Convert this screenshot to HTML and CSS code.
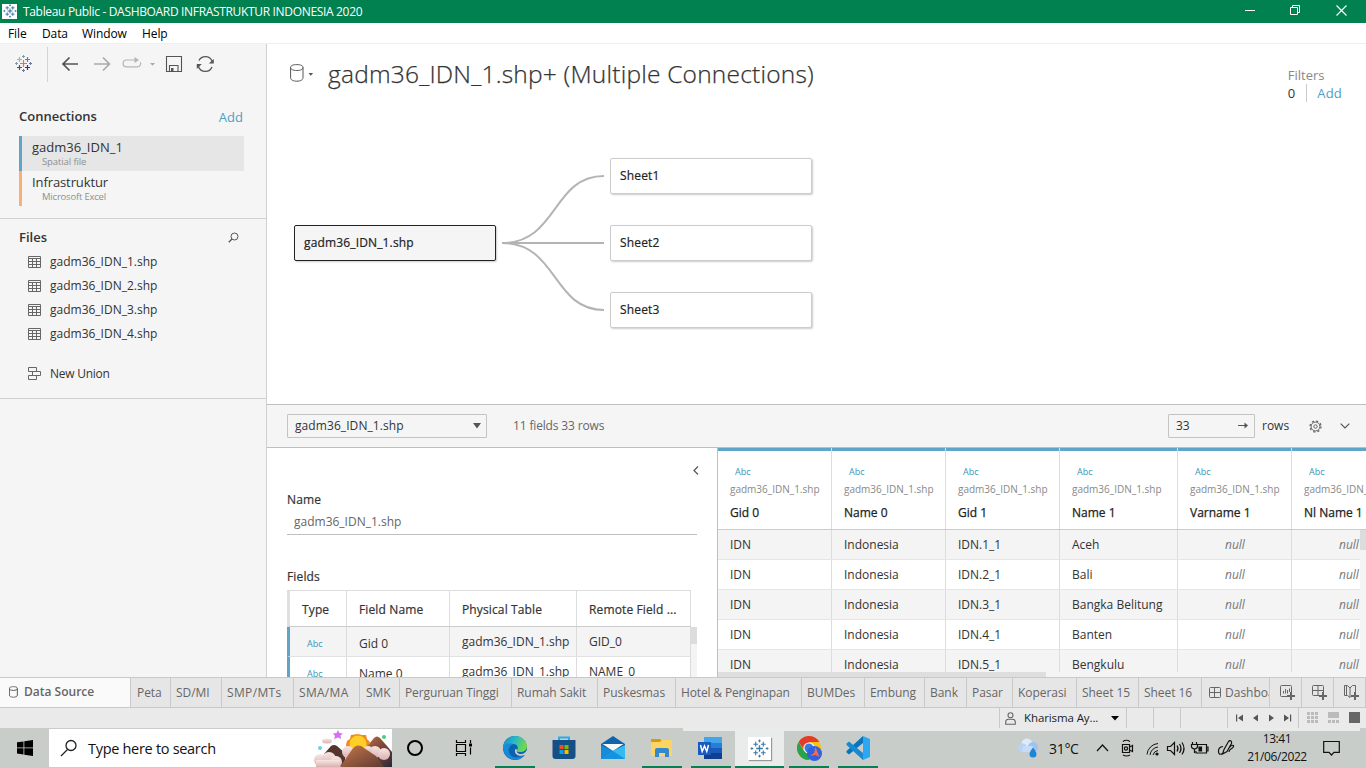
FILE: index.html
```html
<!DOCTYPE html>
<html lang="en">
<head>
<meta charset="utf-8">
<title>Tableau Public - DASHBOARD INFRASTRUKTUR INDONESIA 2020</title>
<link rel="stylesheet" href="styles.css">
</head>
<body>
<svg class="defs" width="0" height="0">
  <defs>
    <symbol id="cross" viewBox="0 0 20 20"><path d="M10 6.500v7M6.500 10h7" stroke-width="1.4"/><path d="M6 3v5M3.500 5.500h5M14 3v5M11.500 5.500h5M6 12v5M3.500 14.500h5M14 12v5M11.500 14.500h5" stroke-width="1.2"/><path d="M10 .5v3M8.500 2h3M10 16.500v3M8.500 18h3M2 8.500v3M.5 10h3M18 8.500v3M16.500 10h3" stroke-width="1"/></symbol>
    <symbol id="grid" viewBox="0 0 13 12"><path d="M.5.5h12v11H.5zM.5 2.500h12M.5 5.500h12M.5 8.500h12M4.500 2.500v9M8.500 2.500v9" fill="none" stroke="#666"/></symbol>
    <symbol id="cyl" viewBox="0 0 14 18"><path d="M.6 3.500v10.300c0 2 2.500 3.400 6.200 3.400s6.200-1.400 6.200-3.400V3.500M.6 3.500C.6 1.600 3 .6 6.800.6s6.200 1 6.200 2.900-2.400 3-6.200 3S.6 5.400.6 3.500z" fill="none" stroke="#555"/></symbol>
    <symbol id="dash" viewBox="0 0 12 12"><path d="M.5 1.500q0-1 1-1h9q1 0 1 1v8q0 1-1 1h-9q-1 0-1-1zM5.500.5v10M.5 5.500h11" fill="none" stroke="#666"/></symbol>
  </defs>
</svg>
<div class="app">
  <header class="titlebar">
    <span class="logo"><svg class="s14" viewBox="0 0 20 20" stroke="#2c6b9a"><use href="#cross"/></svg></span>
    <span class="title">Tableau Public - DASHBOARD INFRASTRUKTUR INDONESIA 2020</span>
    <div class="winbtns">
      <svg width="46" height="23"><path d="M16 10.500h10" stroke="#fff"/></svg>
      <svg width="46" height="23"><path d="M15.500 7.500h7v7h-7zM17.500 7.500v-2h7v7h-2" fill="none" stroke="#fff"/></svg>
      <svg width="46" height="23"><path d="M15.500 5.500l10 10M25.500 5.500l-10 10" stroke="#fff" stroke-width="1.200"/></svg>
    </div>
  </header>
  <nav class="menu"><span class="m1">File</span><span class="m2">Data</span><span class="m3">Window</span><span class="m4">Help</span></nav>

  <div class="work">
    <aside class="side">
      <div class="toolbar">
        <svg width="260" height="40" fill="none">
          <g stroke-width="1.200">
            <path d="M23.500 16v7M20 19.500h7" stroke="#e8762d"/>
            <path d="M19.500 13v5M17 15.500h5" stroke="#eb9d55"/><path d="M27.500 13v5M25 15.500h5" stroke="#59879b"/>
            <path d="M19.500 21v5M17 23.500h5" stroke="#c72035"/><path d="M27.500 21v5M25 23.500h5" stroke="#1f457e"/>
            <path d="M23.500 11v3M22 12.500h3M16.500 18v3M15 19.500h3" stroke="#6fa0b5" stroke-width="1"/><path d="M23.500 25v3M22 26.500h3M30.500 18v3M29 19.500h3" stroke="#6c76a8" stroke-width="1"/>
          </g>
          <path d="M47.500 3v35" stroke="#d4d4d4"/>
          <path d="M78 20H63M69.500 13.500L63 20l6.500 6.500" stroke="#555" stroke-width="1.700"/>
          <path d="M94 20h15M103 13.500l6.500 6.500-6.500 6.500" stroke="#aaa" stroke-width="1.700"/>
          <path d="M137 16h-10.500a3.400 3.400 0 0 0 0 6.800h11a3.200 3.200 0 0 0 2.900-4.500" stroke="#b5b5b5" stroke-width="1.200"/><path d="M134.500 13l4.500 3-4.500 3z" fill="#b5b5b5"/>
          <path d="M150 19h5l-2.500 2.800z" fill="#aaa"/>
          <path d="M166.500 12.500h15v15h-15zM169.500 27.500v-6h8.500v6" stroke="#555" stroke-width="1.100"/><path d="M171 24h2.500v3H171z" fill="#555"/>
          <path d="M199 16.500a7.200 7.200 0 0 1 13 .5M198.500 22.500a7.200 7.200 0 0 0 13.500.5" stroke="#555" stroke-width="1.300"/><path d="M213.800 15v4.500h-5zM196.800 25v-5h5z" fill="#555"/>
        </svg>
      </div>
      <section class="conns">
        <div class="row-head"><b>Connections</b><a class="add">Add</a></div>
        <div class="conn on"><div>gadm36_IDN_1</div><small>Spatial file</small></div>
        <div class="conn or"><div>Infrastruktur</div><small>Microsoft Excel</small></div>
      </section>
      <section class="files">
        <div class="row-head"><b>Files</b><svg width="12" height="12" fill="none" stroke="#555"><circle cx="6.500" cy="4.500" r="3.500"/><path d="M4 7L.8 10.200" stroke-width="1.300"/></svg></div>
        <div class="file"><svg><use href="#grid"/></svg><span>gadm36_IDN_1.shp</span></div>
        <div class="file"><svg><use href="#grid"/></svg><span>gadm36_IDN_2.shp</span></div>
        <div class="file"><svg><use href="#grid"/></svg><span>gadm36_IDN_3.shp</span></div>
        <div class="file"><svg><use href="#grid"/></svg><span>gadm36_IDN_4.shp</span></div>
        <div class="file union"><svg viewBox="0 0 14 14" fill="none" stroke="#666"><path d="M.5.500h8v4h-8zM4.500 4.500h8v4h-8zM.5 8.500h8v4h-8z"/></svg><span>New Union</span></div>
      </section>
    </aside>

    <main class="main">
      <section class="canvas">
        <div class="dshead">
          <svg class="dsicon" viewBox="0 0 14 18"><use href="#cyl"/></svg><svg width="8" height="5"><path d="M1.500 1h4.600L3.800 3.800z" fill="#555"/></svg>
          <h1>gadm36_IDN_1.shp+ (Multiple Connections)</h1>
          <div class="filters"><div class="fl">Filters</div><div class="fr"><span>0</span><a class="add">Add</a></div></div>
        </div>
        <svg class="noodles" width="110" height="150" fill="none" stroke="#b4b4b4" stroke-width="2"><path d="M0 76h102M0 76C56 76 50 9 102 9M0 76C56 76 50 143 102 143"/></svg>
        <div class="node root">gadm36_IDN_1.shp</div>
        <div class="node n1">Sheet1</div>
        <div class="node n2">Sheet2</div>
        <div class="node n3">Sheet3</div>
      </section>

      <section class="gridbar">
        <div class="select">gadm36_IDN_1.shp<svg width="8" height="6"><path d="M0 0h8L4 5.500z" fill="#555"/></svg></div>
        <span class="info">11 fields 33 rows</span>
        <div class="rowsbox">33<svg width="11" height="8"><path d="M0 3.500h8" stroke="#555"/><path d="M6.500 .5L10 3.500 6.500 6.500z" fill="#555"/></svg></div>
        <span class="rows">rows</span>
        <svg class="gear" width="13" height="13" viewBox="0 0 13 13" fill="none" stroke="#666"><circle cx="6.500" cy="6.500" r="4.400"/><circle cx="6.500" cy="6.500" r="1.700"/><circle cx="6.500" cy="6.500" r="5.500" stroke-dasharray="2.160" stroke-width="1.300"/></svg>
        <svg class="chev" width="10" height="6"><path d="M.7.7L5 5 9.300.7" fill="none" stroke="#555" stroke-width="1.200"/></svg>
      </section>

      <section class="lower">
        <div class="meta">
          <svg class="collapse" width="6" height="9"><path d="M5 .5l-4 4 4 4" fill="none" stroke="#555" stroke-width="1.200"/></svg>
          <div class="lab name">Name</div>
          <div class="nameval">gadm36_IDN_1.shp</div>
          <div class="lab fields">Fields</div>
          <div class="mtable">
            <div class="mrow mh"><span>Type</span><span>Field Name</span><span>Physical Table</span><span>Remote Field ...</span></div>
            <div class="mrow g"><span class="abc">Abc</span><span class="low">Gid 0</span><span>gadm36_IDN_1.shp</span><span>GID_0</span></div>
            <div class="mrow"><span class="abc">Abc</span><span class="low">Name 0</span><span>gadm36_IDN_1.shp</span><span>NAME_0</span></div>
            <i class="mtrack"></i>
          </div>
        </div>
        <div class="data">
          <div class="drow dh">
            <div><em>Abc</em><small>gadm36_IDN_1.shp</small><b>Gid 0</b></div>
            <div><em>Abc</em><small>gadm36_IDN_1.shp</small><b>Name 0</b></div>
            <div><em>Abc</em><small>gadm36_IDN_1.shp</small><b>Gid 1</b></div>
            <div><em>Abc</em><small>gadm36_IDN_1.shp</small><b>Name 1</b></div>
            <div><em>Abc</em><small>gadm36_IDN_1.shp</small><b>Varname 1</b></div>
            <div><em>Abc</em><small>gadm36_IDN_1.shp</small><b>Nl Name 1</b></div>
          </div>
          <div class="dbody">
            <div class="drow"><div>IDN</div><div>Indonesia</div><div>IDN.1_1</div><div>Aceh</div><div class="nul">null</div><div class="nul">null</div></div>
            <div class="drow"><div>IDN</div><div>Indonesia</div><div>IDN.2_1</div><div>Bali</div><div class="nul">null</div><div class="nul">null</div></div>
            <div class="drow"><div>IDN</div><div>Indonesia</div><div>IDN.3_1</div><div>Bangka Belitung</div><div class="nul">null</div><div class="nul">null</div></div>
            <div class="drow"><div>IDN</div><div>Indonesia</div><div>IDN.4_1</div><div>Banten</div><div class="nul">null</div><div class="nul">null</div></div>
            <div class="drow"><div>IDN</div><div>Indonesia</div><div>IDN.5_1</div><div>Bengkulu</div><div class="nul">null</div><div class="nul">null</div></div>
            <i class="vtrack"></i>
          </div>
          <div class="htrack"><i></i></div>
        </div>
      </section>
    </main>
  </div>

  <nav class="tabs">
    <div class="tab ds"><svg width="9" height="12" viewBox="0 0 14 18"><use href="#cyl" stroke-width="1.500"/></svg>Data Source</div>
    <div class="tab w40">Peta</div><div class="tab w51">SD/MI</div><div class="tab w72">SMP/MTs</div><div class="tab w66">SMA/MA</div><div class="tab w40">SMK</div><div class="tab w112">Perguruan Tinggi</div><div class="tab w86">Rumah Sakit</div><div class="tab w78">Puskesmas</div><div class="tab w126">Hotel &amp; Penginapan</div><div class="tab w63">BUMDes</div><div class="tab w60">Embung</div><div class="tab w42">Bank</div><div class="tab w46">Pasar</div><div class="tab w64">Koperasi</div><div class="tab w62">Sheet 15</div><div class="tab w63">Sheet 16</div>
    <div class="tab db"><svg width="12" height="12"><use href="#dash"/></svg>Dashboard 1</div>
    <div class="tab ic"><svg width="16" height="16" fill="none" stroke="#666"><path d="M7 11.500H1.500a1 1 0 0 1-1-1v-9a1 1 0 0 1 1-1h9a1 1 0 0 1 1 1V7M3.500 6v2.500M5.500 4v4.500M7.500 5v3.500M9.500 3.500V7"/><path d="M7 11h8M11 7v8" stroke-width="2"/></svg></div>
    <div class="tab ic"><svg width="16" height="16" fill="none" stroke="#666"><path d="M7 10.500H1.500a1 1 0 0 1-1-1v-8a1 1 0 0 1 1-1h9a1 1 0 0 1 1 1V7M6 .5v10M.5 5.500h11"/><path d="M7 11h8M11 7v8" stroke-width="2"/></svg></div>
    <div class="tab ic"><svg width="16" height="16" fill="none" stroke="#666"><path d="M7.500 11L6 12.500l-2.500-2h-3V.5h3L6 3l2.500-2.500h3V7M6 3v9M2.500 .5v10"/><path d="M7 11h8M11 7v8" stroke-width="2"/></svg></div>
  </nav>
  <div class="status">
    <div class="user"><svg width="11" height="13" fill="none" stroke="#666" stroke-width="1.100"><circle cx="5.500" cy="3.200" r="2.500"/><path d="M.7 12.300V10q0-2.800 3-2.800h3.600q3 0 3 2.800v2.300z"/></svg><span>Kharisma Ay...</span><svg width="8" height="5"><path d="M0 0h8L4 4.500z"/></svg></div>
    <div class="c27"></div><div class="c27"></div><div class="c47"></div>
    <div class="pager"><svg width="56" height="8" fill="#555"><path d="M0 .5h1.200v7H0zM7 .5v7L2 4zM22 .5v7L17 4zM33 .5v7L38 4zM48 .5v7L53 4zM54 .5h1.200v7H54z"/></svg></div>
    <div class="views"><svg width="54" height="12"><path d="M0 0h3v3H0zM4 0h3v3H4zM8 0h3v3H8zM0 4h3v3H0zM4 4h3v3H4zM8 4h3v3H8zM0 8h3v3H0zM4 8h3v3H4zM8 8h3v3H8zM21 0h11v6H21zM21 8h3v3h-3zM25 8h3v3h-3zM29 8h3v3h-3z" fill="#bbb"/><path d="M42 0h11v11H42z" fill="#666"/></svg></div>
  </div>

  <footer class="taskbar">
    <div class="start"><svg width="16" height="16"><path d="M0 2.300L6.500 1.400v6.100H0zM7.300 1.200L16 0v7.500H7.300zM0 8.300h6.500v6.100L0 13.600zM7.300 8.300H16V16l-8.700-1.200z"/></svg></div>
    <div class="search">
      <svg width="18" height="18" fill="none" stroke="#222" stroke-width="1.300"><circle cx="11" cy="6.500" r="5"/><path d="M7.500 10.500L1 17"/></svg><span>Type here to search</span>
      <svg class="hills" width="78" height="37" viewBox="0 0 78 37">
        <defs><linearGradient id="mt" x1="0" y1="0" x2="1" y2="1"><stop offset="0" stop-color="#c77748"/><stop offset=".5" stop-color="#7b4636"/><stop offset="1" stop-color="#29283a"/></linearGradient><linearGradient id="mf" x1="0" y1="0" x2="1" y2="1"><stop offset="0" stop-color="#c77748"/><stop offset="1" stop-color="#5f3a33"/></linearGradient><linearGradient id="cl" x1="0" y1="0" x2="0" y2="1"><stop stop-color="#f8e6e4"/><stop offset="1" stop-color="#d9b1b1"/></linearGradient></defs>
        <path d="M44 4l4 1 4 0 1 4 3 3-2 4-1 5-20-1-1-5 1-4 3-2 1-4z" fill="#ef8a1d"/><circle cx="44" cy="14" r="8.500" fill="#ffcf27"/>
        <path d="M50 20l10-12q3-3 6 0l7 8 5 6v15H48z" fill="url(#mt)"/><path d="M10 24l7-8q3-2 6 0l9 8-2 12H10z" fill="#52352f"/>
        <g fill="url(#cl)"><circle cx="61" cy="22" r="6"/><circle cx="70" cy="24" r="6"/><circle cx="54" cy="20" r="4"/><circle cx="34" cy="22" r="6"/><circle cx="6" cy="30" r="6"/><circle cx="15" cy="29" r="7"/><circle cx="22" cy="32" r="6"/><path d="M2 30h24v7H2z"/><ellipse cx="13" cy="11" rx="5" ry="2.500"/></g>
        <path d="M26 37l11-16q6-9 13-3l12 8 8 11z" fill="url(#mf)"/>
        <path d="M24 0l1.500 3 3.500.5-2.500 2L27 9l-3-1.500L20 9l1-3-2-2.500 3.500-.5z" fill="#d86ff2"/><circle cx="70" cy="7" r="2" fill="#48cf77"/><circle cx="6" cy="18" r="2" fill="#62d5e5"/>
      </svg>
    </div>
    <div class="ti left1"><svg width="18" height="18"><circle cx="9" cy="9" r="7" fill="none" stroke="#000" stroke-width="2"/></svg></div>
    <div class="ti left2"><svg width="18" height="18" fill="none" stroke="#000" stroke-width="1.200"><path d="M1.500 1v2.500h9V1M1.500 17v-2.500h9V17M1.500 5.500h9v7h-9zM15.500 1v3M15.500 8.500v7"/><path d="M14 4.500h3v3h-3z" fill="#000" stroke="none"/></svg></div>
    <div class="ti run edge"><svg width="24" height="24"><defs><linearGradient id="ed" x1="0" y1="0" x2="1" y2=".3"><stop stop-color="#1687ce"/><stop offset=".5" stop-color="#27b6cb"/><stop offset="1" stop-color="#70d84d"/></linearGradient></defs><circle cx="12" cy="12" r="12" fill="#0c62ae"/><path d="M0 11C1 4 6 0 12 0c7 0 12 5 12 10 0 4-3 6-7 6-3 0-4-1-3-2 2-3 0-6-4-6-5 0-9 2-10 6z" fill="url(#ed)"/><path d="M10 8.500c-5 1-6 9-1 12 3 2 8 1 12-2-4 7-12 6-17 2-5-5-4-12 1-13q3-1 5 1z" fill="#178bd8"/><path d="M14 14c-1 2 1 4 4 4 3 0 5-2 5.500-4l.5 2-2 3c-5 2-11 0-10-5q1-2 2 0z" fill="#c9cdca"/></svg></div>
    <div class="ti"><svg width="24" height="24"><path d="M7 5V1.500h10V5" fill="none" stroke="#28aee5" stroke-width="2"/><path d="M.5 4h23v16q0 3-3 3h-17q-3 0-3-3z" fill="#164f85"/><path d="M7.500 9h4v4h-4z" fill="#f25022"/><path d="M12.500 9h4v4h-4z" fill="#7fba00"/><path d="M7.500 14h4v4h-4z" fill="#00a4ef"/><path d="M12.500 14h4v4h-4z" fill="#ffb900"/></svg></div>
    <div class="ti"><svg width="24" height="24"><path d="M0 8l12-8 12 8v15H0z" fill="#1063ad"/><path d="M1.500 8h21L12 15z" fill="#f7f7f7"/><path d="M0 9l12 6L0 23z" fill="#168bd8"/><path d="M24 9v14H0l12-8z" fill="#35baf0"/><path d="M0 23l12-8 12 8z" fill="#1593e0"/></svg></div>
    <div class="ti run"><svg width="22" height="20"><path d="M0 1h9l2 2h10v5H0z" fill="#d99a08"/><path d="M0 4h9l2-2h10v16H0z" fill="#fcd462"/><path d="M4 19v-7q0-2 2-2h10q2 0 2 2v7h-4v-4H8v4z" fill="#3289cf"/></svg></div>
    <div class="ti run"><svg width="25" height="22"><path d="M6 0h18v22H6z" fill="#2b7cd3"/><path d="M6 0h18v6H6z" fill="#41a5ee"/><path d="M6 11h18v6H6z" fill="#185abd"/><path d="M6 16h18v6H6z" fill="#103f91"/><path d="M0 5h13v13H0z" fill="#185abd"/><path d="M2.500 8l1.700 6.500L6.500 9l2.300 5.500L10.500 8" fill="none" stroke="#fff" stroke-width="1.500"/></svg></div>
    <div class="ti run active"><span class="tab-logo"><svg class="s19" viewBox="0 0 20 20" stroke="#3b7aa5"><use href="#cross"/></svg></span></div>
    <div class="ti run chrome"><svg width="27" height="25"><circle cx="12" cy="12" r="12" fill="#fbc116"/><path d="M1.600 6A12 12 0 0 1 22.400 6H12L8 15z" fill="#e33b2e"/><path d="M1.600 6A12 12 0 0 0 12 24l5-9H7z" fill="#29a24c"/><circle cx="12" cy="12" r="5.600" fill="#fff"/><circle cx="12" cy="12" r="4.500" fill="#3879e8"/><circle cx="17.500" cy="17.500" r="7.500" fill="#2f62df"/><path d="M18.500 11l4 10-4-2-5.500 1 4-3z" fill="#f06a50"/></svg></div>
    <div class="ti run"><svg width="24" height="24"><path d="M17 0l7 3v18l-7 3z" fill="#2aa8f2"/><path d="M17 0v7L3 18.500.5 16.500v-1.500z" fill="#0874bb"/><path d="M17 24v-7L3 5.500.5 7.500V9z" fill="#178bd0"/></svg></div>
    <div class="tray">
      <svg class="weather" width="22" height="20"><circle cx="9" cy="6" r="5.500" fill="#dceafb"/><circle cx="4.500" cy="10" r="4.500" fill="#b8d2f4"/><circle cx="15" cy="9" r="5" fill="#9fc3ef"/><path d="M5 8h10v6H4z" fill="#c7dcf7"/><path d="M15 9.500q3.500 4.500 3.500 6.500a3.500 3.500 0 0 1-7 0q0-2 3.500-6.500z" fill="#1687d9"/></svg>
      <span class="temp">31°C</span>
      <svg class="icons" width="142" height="18" fill="none" stroke="#111" stroke-width="1.200"><path d="M1 12l5.500-6 5.500 6M26.500 5.500h7v8h-7zM33.500 8l3-1.500v6L33.500 11M27 2.500q3-2.500 7 0M27 16q3.500 2 7 0"/><circle cx="30" cy="9.500" r="1.600"/><path d="M51 15.500A12 12 0 0 1 62 4.500M54 16A9 9 0 0 1 62 8M57 16A6 6 0 0 1 62 11.500" stroke-width="1"/><circle cx="61" cy="15" r="1" fill="#111"/><path d="M71.500 7.500h3l4-4v12l-4-4h-3zM81 6.500q2 3 0 6M83.500 5q3 4.500 0 9M86 3.500q4 6 0 12"/><path d="M101 5.500h9.500v8.500H100v-2M110.500 8h1.500v4h-1.500M96.500 3v3M100.500 3v3M95.500 5.500h6v2q0 2-3 2.500-3-.5-3-2.500zM98.500 10v4"/><path d="M103 8h2.500v4H103z" fill="#111"/></svg>
      <svg class="pen" width="18" height="18" viewBox="0 0 18 18" fill="none" stroke="#111" stroke-width="1.200"><path d="M5.500 15L7 10.500l4.500-8q1.500-1.500 2.500-.5t.5 2.500l-4.500 8zM6 7.500Q1 8 1.500 13q.5 3.500 4 1.500M12.500 8.500q2-3 4-2 .5 2-2.500 3.500-2 1-2 3"/></svg>
      <div class="clock"><div>13:41</div><div>21/06/2022</div></div>
      <svg class="note" width="17" height="17" fill="none" stroke="#111" stroke-width="1.200"><path d="M.7 1.500h15.600v10.800H11L8.500 15 6 12.300H.7z"/></svg>
    </div>
    <i class="strip"></i>
  </footer>
</div>
</body>
</html>
```
FILE: styles.css
```css
* { box-sizing: border-box; }
body { margin: 0; overflow: hidden; font: 12px/16px "Open Sans", "Noto Sans", sans-serif; color: #333; }
svg { display: block; flex: none; }
.defs { position: absolute; }
.s14 { width: 14px; height: 14px; }
.s19 { width: 19px; height: 19px; }
.app { width: 1366px; height: 768px; display: flex; flex-direction: column; overflow: hidden; }
.add { color: #4e9fc1; }

.titlebar { height: 23px; flex: none; background: #00814f; color: #fff; display: flex; align-items: center; }
.logo { width: 15px; height: 15px; margin: -1px 6px 0 2px; background: #fff; display: grid; place-items: center; }
.title { font-size: 12px; letter-spacing: -.33px; }
.winbtns { margin-left: auto; display: flex; margin-right: -1px; }
.menu { height: 21px; flex: none; display: flex; align-items: center; color: #000; border-bottom: 1px solid #efefef; padding: 2px 0 0 8px; }
.menu span { letter-spacing: -.1px; }
.m1 { width: 34px; }
.m2 { width: 40px; }
.m3 { width: 60px; }

.work { height: 633px; flex: none; display: flex; }
.side { width: 267px; flex: none; background: #f5f5f5; border-right: 1px solid #d0d0d0; }
.toolbar { height: 40px; }
.row-head { display: flex; justify-content: space-between; align-items: center; }
.row-head b { font-size: 13px; font-weight: 600; letter-spacing: 0; padding-bottom: 2px; }
.row-head .add { font-size: 13px; }
.conns { height: 135px; padding: 24px 22px 0 19px; border-bottom: 1px solid #d0d0d0; }
.conns .row-head { height: 18px; margin-bottom: 10px; padding-right: 1px; }
.conn { height: 35px; border-left: 3px solid #60a5c8; padding: 3px 0 0 10px; font-size: 13px; }
.conn small { display: block; font-size: 9.500px; line-height: 13px; padding-left: 10px; color: #8f8f8f; letter-spacing: -.2px; }
.on { background: #e6e6e6; }
.on small { letter-spacing: -.1px; }
.or { border-color: #fbb072; letter-spacing: -.1px; }
.files { height: 180px; border-bottom: 1px solid #d0d0d0; padding: 9px 26px 0 19px; }
.files .row-head { height: 20px; margin-bottom: 2px; }
.file { height: 24px; display: flex; align-items: center; padding-left: 9px; gap: 9px; }
.file svg { width: 13px; height: 12px; }
.union { margin-top: 16px; }
.union svg { width: 14px; height: 14px; margin-right: -1px; }
.union span { letter-spacing: -.25px; }

.main { flex: 1; min-width: 0; display: flex; flex-direction: column; }
.canvas { height: 360px; position: relative; }
.dshead { display: flex; align-items: flex-start; padding: 20px 24px 0 23px; }
.dsicon { width: 14px; height: 18px; }
.dsicon + svg { margin: 8px 0 0 3px; }
h1 { margin: -6px 0 0 13px; font-size: 24.500px; line-height: 32px; font-weight: 300; white-space: nowrap; letter-spacing: .21px; -webkit-text-stroke: .25px #333; }
.filters { margin-left: auto; font-size: 13px; line-height: 18px; padding-top: 2px; color: #888; }
.fl { margin-left: -1px; }
.fr { display: flex; color: #333; margin-left: -1px; }
.fr .add { letter-spacing: .2px; }
.fr span { border-right: 1px solid #ccc; padding-right: 11px; margin-right: 10px; }
.noodles { position: absolute; left: 235px; top: 123px; }
.node { position: absolute; left: 343px; width: 202px; height: 36px; border: 1px solid #ccc; border-radius: 2px; background: #fff; box-shadow: 1px 1px 2px #ccc; padding: 9px; font-weight: 500; color: #222; -webkit-text-stroke: .2px #222; letter-spacing: .15px; }
.root { left: 27px; top: 181px; background: #f5f5f5; border-color: #222; }
.n1 { top: 114px; }
.n2 { top: 181px; }
.n3 { top: 248px; }

.gridbar { height: 44px; flex: none; background: #f5f5f5; border: solid #bfbfbf; border-width: 1px 0; display: flex; align-items: center; padding: 0 16px 0 20px; }
.select, .rowsbox { height: 24px; border: 1px solid #c4c4c4; border-radius: 1px; display: flex; align-items: center; justify-content: space-between; padding: 0 5px 0 7px; font-weight: 500; }
.select { width: 200px; letter-spacing: .08px; }
.info { margin-left: 26px; color: #666; letter-spacing: -.15px; }
.rowsbox { width: 87px; margin-left: auto; }
.rows { margin: 0 20px 0 7px; width: 27px; }
.chev { margin-left: 18px; }

.lower { flex: 1; min-height: 0; display: flex; overflow: hidden; }
.meta { width: 450px; flex: none; padding: 18px 0 0 20px; }
.collapse { margin-left: 406px; }
.lab { font-weight: 500; -webkit-text-stroke: .2px #333; letter-spacing: .15px; }
.name { margin-top: 17px; }
.nameval { width: 410px; height: 27px; border-bottom: 1px solid #bfbfbf; padding: 6px 7px; color: #666; }
.fields { margin: 34px 0 5px; }
.mtable { width: 410px; position: relative; }
.mrow { width: 404px; height: 30px; display: grid; grid-template-columns: 57px 103px 127px 114px; border-left: 3px solid #60a5c8; border-bottom: 1px solid #e2e2e2; }
.mrow span { border-right: 1px solid #dcdcdc; padding: 6px 0 0 12px; line-height: 17px; white-space: nowrap; }
.mrow .low { padding-top: 8px; }
.mrow .abc { padding: 8px 0 0 17px; color: #3b96b4; font-size: 9px; }
.mh { height: 37px; border-left-color: #e0e0e0; border-top: 1px solid #dcdcdc; border-bottom-color: #ccc; font-weight: 500; -webkit-text-stroke: .2px #333; letter-spacing: .13px; }
.mh span { padding-top: 10px; }
.g { background: #f4f4f4; }
.mtrack { position: absolute; right: 0; top: 37px; width: 6px; height: 60px; background: linear-gradient(#dcdcdc 17px, #f4f4f4 17px); }

.data { flex: 1; min-width: 0; border-left: 1px solid #bfbfbf; overflow: hidden; }
.drow { display: grid; grid-template-columns: 114px 114px 114px 118px 114px 114px; height: 30px; width: 688px; border-bottom: 1px solid #e6e6e6; }
.drow > div { border-right: 1px solid #dcdcdc; padding: 6px 0 0 12px; white-space: nowrap; line-height: 17px; }
.drow .nul { padding-left: 47px; color: #777; font-style: italic; }
.dh { height: 82px; border-bottom-color: #ccc; }
.dh > div { background: linear-gradient(#60a5c8, #60a5c8) padding-box 0 0 / 100% 3px no-repeat; padding-top: 16px; }
.dh em { display: block; font: 9px/16px "Open Sans", sans-serif; font-weight: 500; color: #3b96b4; padding-left: 5px; }
.dh small { display: block; font-size: 10px; line-height: 18px; color: #888; }
.dh b { display: block; font-weight: 500; line-height: 18px; margin-top: 6px; color: #222; -webkit-text-stroke: .25px #222; }
.dbody { height: 142px; overflow: hidden; position: relative; }
.dbody .drow:nth-child(odd) { background: #f4f4f4; }
.vtrack { position: absolute; right: 0; top: 0; width: 6px; height: 142px; background: linear-gradient(#dcdcdc 20px, #f4f4f4 20px); }
.htrack { height: 5px; background: #f4f4f4; }
.htrack i { display: block; width: 328px; height: 5px; background: #dedede; }

.tabs { height: 31px; flex: none; display: flex; border: solid #c9c9c9; border-width: 1px 0; background: #e6e6e6; color: #666; }
.tab { height: 29px; flex: none; border-right: 1px solid #c9c9c9; display: flex; align-items: center; padding-left: 5px; padding-top: 1px; white-space: nowrap; overflow: hidden; }
.w40, .w51, .w112, .w86, .w78, .w126, .w63, .w60, .w42, .w46, .w64, .w62, .w66, .w72 { letter-spacing: -.05px; }
.ds { width: 131px; background: #fafafa; font-weight: 600; padding: 0 0 2px 9px; gap: 6px; }
.w40 { width: 40px; padding-left: 6px; }
.w51 { width: 51px; }
.w72 { width: 72px; letter-spacing: .35px; }
.w66 { width: 66px; letter-spacing: .3px; }
.w112 { width: 112px; letter-spacing: -.1px; }
.w86 { width: 86px; }
.w78 { width: 78px; }
.w126 { width: 126px; letter-spacing: -.15px; }
.w63 { width: 63px; }
.w60 { width: 60px; }
.w42 { width: 42px; }
.w46 { width: 46px; }
.w64 { width: 64px; }
.w62 { width: 62px; }
.db { width: 68px; padding-left: 7px; gap: 4px; }
.ic { width: 32px; padding: 0 0 0 10px; }
.status { height: 20px; flex: none; background: #eaeaea; display: flex; justify-content: flex-end; }
.status > div { border-left: 1px solid #c9c9c9; display: flex; align-items: center; }
.user { width: 127px; padding-left: 5px; }
.user span { width: 96px; padding-left: 8px; font-size: 11.500px; letter-spacing: -.1px; flex: none; color: #222; }
.user svg:last-child { margin-left: -1px; }
.c27 { width: 27px; }
.c47 { width: 47px; }
.pager { width: 71px; padding-left: 8px; }
.views { width: 68px; padding-left: 8px; }

.taskbar { height: 40px; flex: none; background: #c9cdca; display: flex; position: relative; color: #111; }
.start { width: 49px; display: grid; place-items: center; }
.search { width: 343px; height: 39px; margin-top: 1px; background: #fff; display: flex; align-items: center; padding-left: 11px; border-bottom: 1px solid #ccc; }
.search span { font-size: 14.500px; margin-left: 10px; flex: 1; letter-spacing: -.3px; padding-top: 1px; }
.hills { align-self: flex-end; }
.ti { width: 49px; display: grid; place-items: center; }
.left1, .left2 { padding-right: 3px; }
.run { box-shadow: inset 5px 0 #c9cdca, inset -4px 0 #c9cdca, inset 0 -2px #008456; }
.active { background: #eaeceb; box-shadow: inset 0 -2px #008456; z-index: 1; }
.tab-logo { width: 23px; height: 23px; background: #fff; box-shadow: 1px 1px 1px #999; display: grid; place-items: center; }
.chrome { padding-left: 4px; }
.tray { flex: 1; display: flex; align-items: center; }
.weather { margin-left: 136px; }
.temp { font-size: 14px; margin-left: 9px; width: 37px; letter-spacing: -.3px; white-space: nowrap; padding-top: 1px; }
.icons { margin-left: 10px; width: 113px; }
.pen { margin-left: 8px; }
.clock { width: 62px; margin-left: 11px; text-align: center; line-height: 18px; font-size: 12px; letter-spacing: -.4px; white-space: nowrap; }
.note { margin-left: 15px; }
.strip { position: absolute; left: 683px; right: 6px; top: 0; height: 3px; background: #ebebeb; }
```
